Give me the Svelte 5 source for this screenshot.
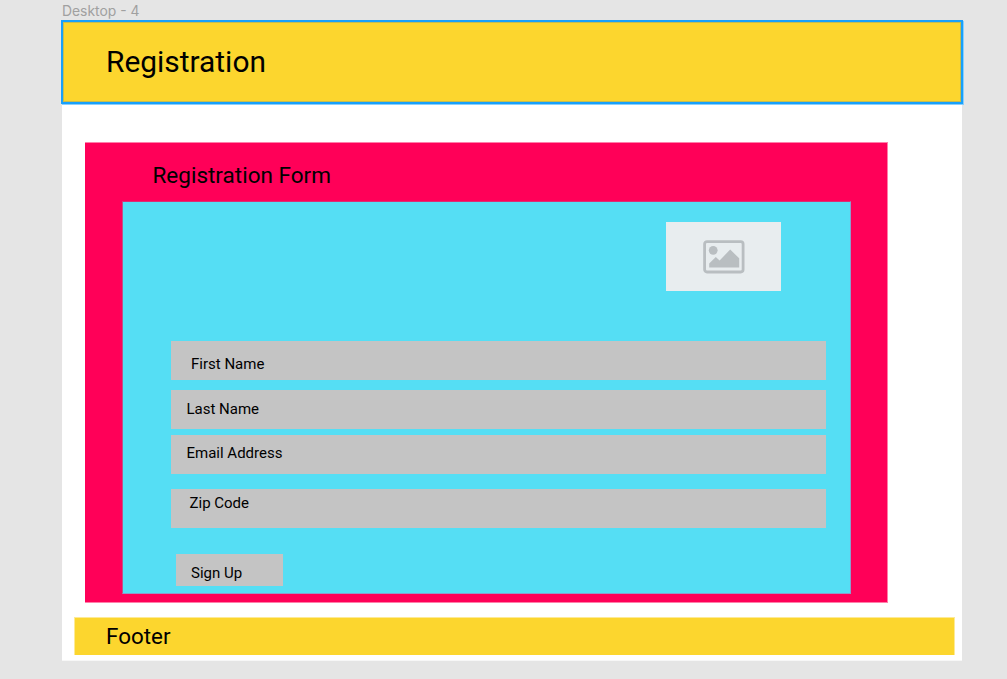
<script>
  const fields = [
    { label: 'First Name', gap: 0, x: 20, y: 13 },
    { label: 'Last Name', gap: 10, x: 15.5, y: 9 },
    { label: 'Email Address', gap: 6, x: 15.5, y: 8 },
    { label: 'Zip Code', gap: 15, x: 18.5, y: 4 }
  ];
</script>

<div class="canvas">
  <div class="frame-name">Desktop - 4</div>
  <main class="board">
    <header><h1>Registration</h1></header>
    <section class="panel">
      <h2>Registration Form</h2>
      <form class="form">
        <div class="picture">
          <svg width="42" height="34" viewBox="0 0 42 34" aria-hidden="true">
            <rect x="1.6" y="1.6" width="38.5" height="30.4" rx="2.4" fill="none" stroke="#b9bec1" stroke-width="2.8" />
            <circle cx="10.2" cy="10.3" r="4.4" fill="#b9bec1" />
            <path d="M6.2 27.5V23.6L12.8 17 16.6 20.4 27.2 9.6 36.2 18.3V27.5Z" fill="#b9bec1" />
          </svg>
        </div>
        {#each fields as f}
          <div class="field" style="margin-top:{f.gap}px; padding:{f.y}px 0 0 {f.x}px">{f.label}</div>
        {/each}
        <div class="button">Sign Up</div>
      </form>
    </section>
    <footer>Footer</footer>
  </main>
</div>

<style>
  :global(body) { background: #e5e5e5; overflow: hidden; }
  .canvas {
    box-sizing: border-box;
    width: 1007px;
    height: 679px;
    background: #e5e5e5;
    color: #000;
    font-family: Roboto, sans-serif;
  }
  .frame-name {
    height: 20px;
    padding-left: 62px;
    font: 13.9px/23px Inter, sans-serif;
    color: #a0a0a0;
    box-sizing: border-box;
  }
  .board {
    box-sizing: border-box;
    width: 900px;
    height: 641px;
    margin-left: 62px;
    background: #fff;
    border-bottom: 1px solid #f7f7f7;
  }
  header {
    box-sizing: border-box;
    width: 902px;
    height: 84px;
    margin-left: -1px;
    padding: 22px 0 0 43px;
    border: 2px solid #18a0fb;
    background: #fcd62e;
    box-shadow: inset 0 0 0 1px #c4bd51, 1px 1px 0 #8bcffc;
  }
  h1, h2 { margin: 0; font-weight: 400; }
  h1 { font-size: 29.9px; line-height: 35px; }
  .panel {
    box-sizing: border-box;
    width: 803px;
    height: 461px;
    margin: 38px 0 0 23px;
    padding: 19px 0 0 36px;
    background: #ff0058;
    border: solid #ff7faa;
    border-width: 1px 1px 1px 0;
    display: flex;
    flex-direction: column;
  }
  h2 { height: 39px; padding-left: 31.5px; font-size: 22.5px; line-height: 26px; }
  .form {
    box-sizing: border-box;
    width: 729px;
    height: 393px;
    margin-left: 1px;
    padding: 20px 0 0 48px;
    background: #55def4;
    border: 1px solid #8f9bcb;
    border-top-color: #d82f77;
    border-left-color: #c05089;
  }
  .picture {
    width: 115px;
    height: 69px;
    margin: 0 0 50px 495px;
    background: #e8edef;
    display: flex;
    align-items: center;
    justify-content: center;
  }
  .field {
    box-sizing: border-box;
    width: 655px;
    height: 39px;
    background: #c4c4c4;
    font-size: 15px;
    line-height: 20px;
  }
  .button {
    box-sizing: border-box;
    width: 107px;
    height: 32px;
    margin: 26px 0 0 5px;
    padding: 9px 0 0 15px;
    background: #c4c4c4;
    font-size: 15px;
    line-height: 20px;
  }
  footer {
    box-sizing: border-box;
    width: 881px;
    height: 38px;
    margin: 14px 0 0 12px;
    padding: 5px 0 0 31px;
    background: #fcd62e;
    border: solid #fdea96;
    border-width: 1px 1px 0 1px;
    font-size: 22.4px;
    line-height: 26px;
  }
</style>
